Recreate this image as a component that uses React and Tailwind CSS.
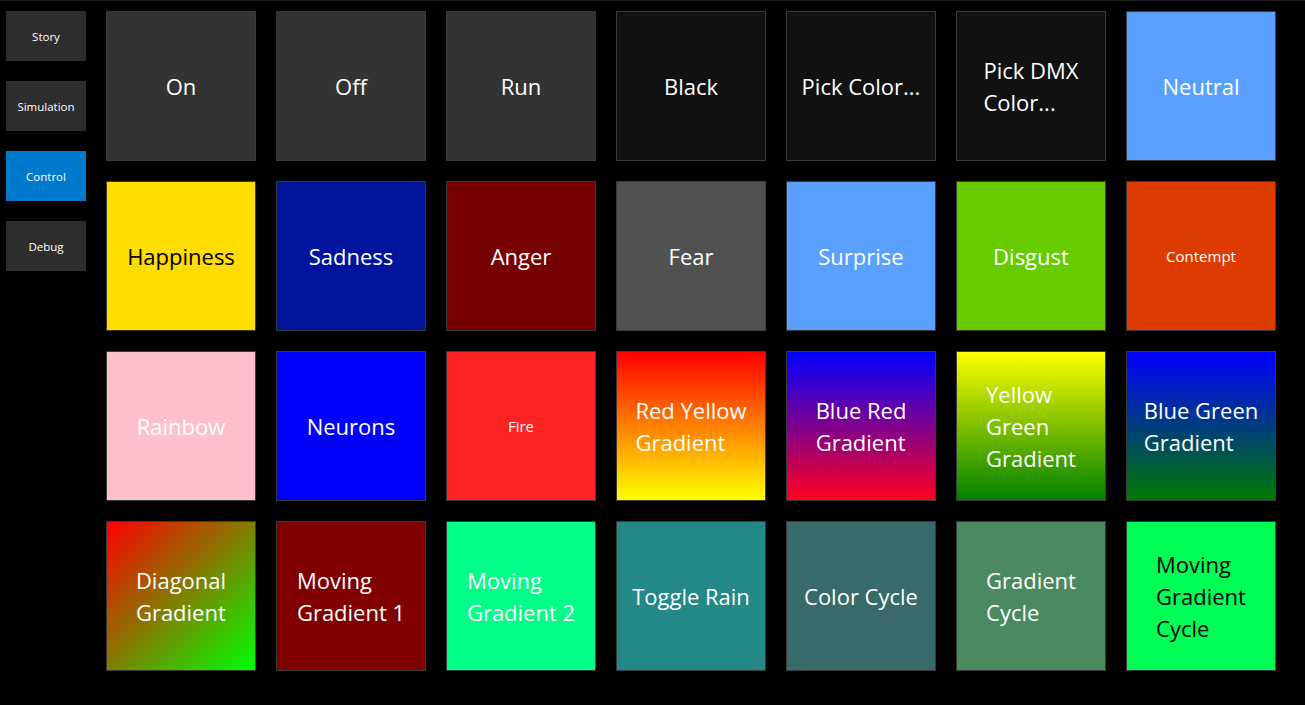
import React from 'react'

const nav = [
  { label: 'Story' },
  { label: 'Simulation' },
  { label: 'Control', active: true },
  { label: 'Debug' },
]

// each tile: lines of the label, background classes, text colour, size
const tiles = [
  { lines: ['On'], bg: 'bg-[#333333]' },
  { lines: ['Off'], bg: 'bg-[#333333]' },
  { lines: ['Run'], bg: 'bg-[#333333]' },
  { lines: ['Black'], bg: 'bg-[#111111]' },
  { lines: ['Pick Color...'], bg: 'bg-[#111111]' },
  { lines: ['Pick DMX', 'Color...'], bg: 'bg-[#111111]' },
  { lines: ['Neutral'], bg: 'bg-[#5aa0ff]' },

  { lines: ['Happiness'], bg: 'bg-[#ffdd00]', dark: true },
  { lines: ['Sadness'], bg: 'bg-[#00149e]' },
  { lines: ['Anger'], bg: 'bg-[#770000]' },
  { lines: ['Fear'], bg: 'bg-[#515151]' },
  { lines: ['Surprise'], bg: 'bg-[#5aa0ff]' },
  { lines: ['Disgust'], bg: 'bg-[#66cc00]' },
  { lines: ['Contempt'], bg: 'bg-[#dd3b00]', small: true },

  { lines: ['Rainbow'], bg: 'bg-[#ffc0cb]' },
  { lines: ['Neurons'], bg: 'bg-[#0000ff]' },
  { lines: ['Fire'], bg: 'bg-[#ff2424]', small: true },
  { lines: ['Red Yellow', 'Gradient'], bg: 'bg-[linear-gradient(to_bottom,#ff0000,#ffff00)]' },
  { lines: ['Blue Red', 'Gradient'], bg: 'bg-[linear-gradient(to_bottom,#0000ff,#ff0020)]' },
  { lines: ['Yellow', 'Green', 'Gradient'], bg: 'bg-[linear-gradient(to_bottom,#ffff00,#008000)]' },
  { lines: ['Blue Green', 'Gradient'], bg: 'bg-[linear-gradient(to_bottom,#0000ff,#007a00)]' },

  { lines: ['Diagonal', 'Gradient'], bg: 'bg-[linear-gradient(to_bottom_right,#ff0000,#00ff00)]' },
  { lines: ['Moving', 'Gradient 1'], bg: 'bg-[#800000]' },
  { lines: ['Moving', 'Gradient 2'], bg: 'bg-[#00ff88]' },
  { lines: ['Toggle Rain'], bg: 'bg-[#258888]' },
  { lines: ['Color Cycle'], bg: 'bg-[#386a6a]' },
  { lines: ['Gradient', 'Cycle'], bg: 'bg-[#4a8a5e]' },
  { lines: ['Moving', 'Gradient', 'Cycle'], bg: 'bg-[#00ff55]', dark: true },
]

function Tile({ lines, bg, dark, small }) {
  return (
    <button
      className={`w-[150px] h-[150px] border border-[#3a3a3a] flex items-center justify-center ${bg} ${dark ? 'text-black' : 'text-white'}`}
    >
      <span className={`text-left ${small ? 'text-[15px] leading-5' : 'text-[22px] leading-[32px]'}`}>
        {lines.map((l, i) => (
          <span key={i} className="block whitespace-nowrap">{l}</span>
        ))}
      </span>
    </button>
  )
}

export default function App() {
  return (
    <div
      className="w-[1305px] h-[705px] bg-black border-t border-[#1c1c1c] overflow-hidden"
      style={{ fontFamily: '"Open Sans", "Noto Sans", sans-serif' }}
    >
      <div className="flex pt-[10px] pl-[6px] gap-5">
        <nav className="flex flex-col gap-5">
          {nav.map(n => (
            <button
              key={n.label}
              className={`w-20 h-[50px] pt-0.5 text-[11.5px] text-white ${n.active ? 'bg-[#007acc]' : 'bg-[#2d2d2d]'}`}
            >
              {n.label}
            </button>
          ))}
        </nav>
        <div className="grid grid-cols-[repeat(7,150px)] gap-5">
          {tiles.map((t, i) => (
            <Tile key={i} {...t} />
          ))}
        </div>
      </div>
    </div>
  )
}
